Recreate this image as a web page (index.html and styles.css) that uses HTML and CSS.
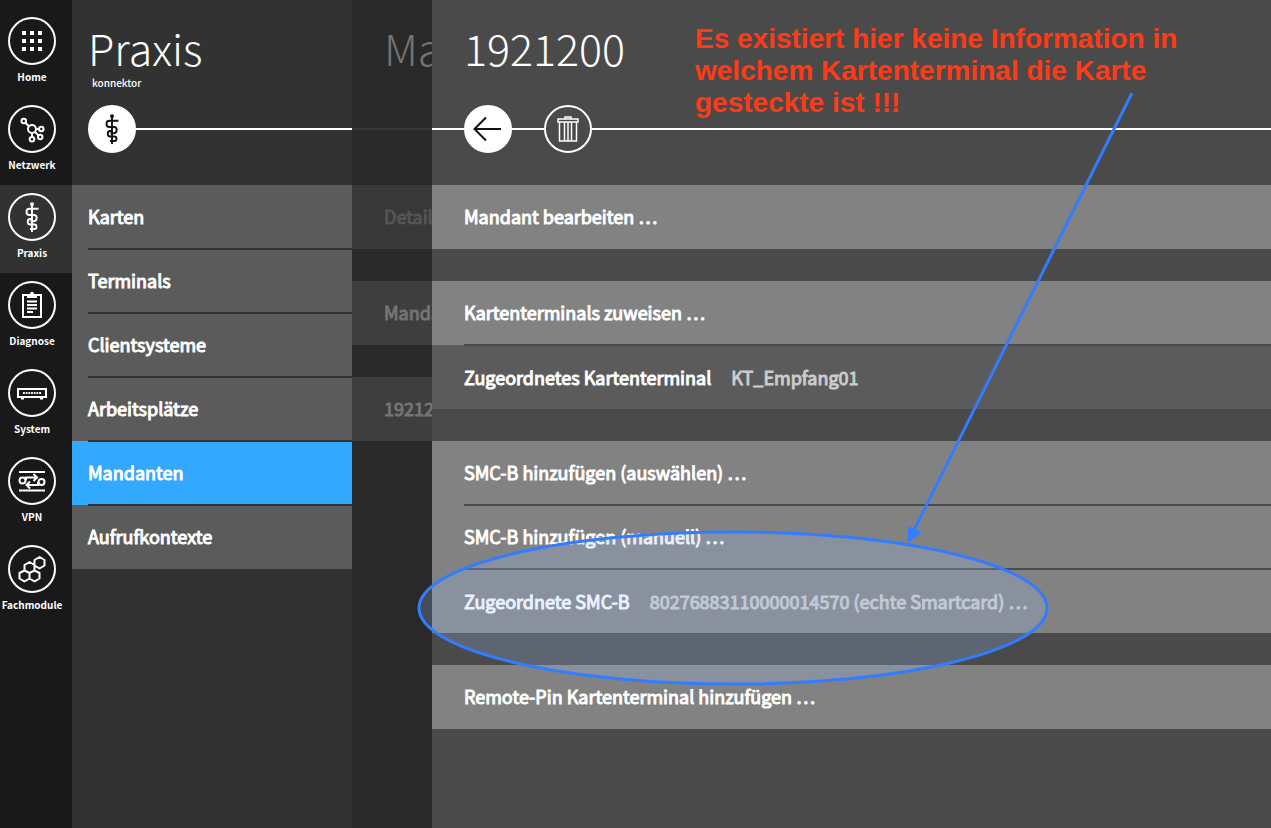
FILE: index.html
```html
<!DOCTYPE html>
<html lang="de">
<head>
<meta charset="utf-8">
<title>Konnektor – Praxis</title>
<link rel="stylesheet" href="styles.css">
</head>
<body>
<svg class="defs" width="0" height="0" aria-hidden="true">
  <symbol id="staff" viewBox="0 0 48 48"><path d="M24 11v28M30.500 15.800H21.500c-4 0-4 6.200 0 6.200h4.500c3.600 0 3.600 6.200 0 6.200h-3.500M24 26h-2c-3 0-3 5.500 0 5.500h4.500c2.600 0 2.600 4.500 0 4.500H22" fill="none" stroke="currentColor" stroke-width="1.900"/><circle cx="24" cy="11.300" r="2" fill="currentColor"/></symbol>
</svg>
<div class="app">
  <nav class="rail" aria-label="Hauptmenü">
    <a class="rail-item" href="#home"><span class="disc"><svg viewBox="0 0 48 48"><path d="M14 14h4v4h-4zM22 14h4v4h-4zM30 14h4v4h-4zM14 22h4v4h-4zM22 22h4v4h-4zM30 22h4v4h-4zM14 30h4v4h-4zM22 30h4v4h-4zM30 30h4v4h-4z" fill="currentColor"/></svg></span><span>Home</span></a>
    <a class="rail-item" href="#netzwerk"><span class="disc"><svg viewBox="0 0 48 48" fill="none" stroke="currentColor" stroke-width="2"><circle cx="24" cy="24" r="4"/><circle cx="15.800" cy="16" r="2.300"/><circle cx="33.300" cy="24" r="2.200"/><circle cx="32.200" cy="32" r="2.200"/><circle cx="24" cy="34.300" r="2.300"/><path d="m17.300 17.700 3.700 3.500M28 24h3.200M27 27l3.500 3.400M24 28v4"/></svg></span><span>Netzwerk</span></a>
    <a class="rail-item active" href="#praxis"><span class="disc"><svg><use href="#staff"/></svg></span><span>Praxis</span></a>
    <a class="rail-item" href="#diagnose"><span class="disc"><svg viewBox="0 0 48 48"><path d="M19 14h-4v22h18V14h-4" fill="none" stroke="currentColor" stroke-width="2"/><path d="M19 17v-4h3c0-3 4-3 4 0h3v4z" fill="currentColor"/><path d="M19 20.500h10M19 24h10M19 27.500h10M19 31h6" stroke="currentColor" stroke-width="1.800"/></svg></span><span>Diagnose</span></a>
    <a class="rail-item" href="#system"><span class="disc"><svg viewBox="0 0 48 48"><path d="M10 20h28v8H10z" fill="none" stroke="currentColor" stroke-width="2"/><path d="M15 24h18" stroke="currentColor" stroke-width="2" stroke-dasharray="1.800 .9"/><path d="M13 29h3v1.500h-3zM32 29h3v1.500h-3z" fill="currentColor"/></svg></span><span>System</span></a>
    <a class="rail-item" href="#vpn"><span class="disc"><svg viewBox="0 0 48 48" fill="none" stroke="currentColor" stroke-width="2"><path d="M11 15h26M11 33.500h26M18 23v-2.500h10M25.500 17l3.500 3.500-3.500 3.500M30 25v3H19M22 24.500l-3.500 3.500 3.500 3.500"/><circle cx="14.500" cy="23.500" r="3"/><circle cx="33.500" cy="25" r="3"/></svg></span><span>VPN</span></a>
    <a class="rail-item" href="#fachmodule"><span class="disc"><svg viewBox="0 0 48 48" fill="none" stroke="currentColor" stroke-width="2" stroke-linejoin="round"><path d="m31.500 12 5 3v5.500l-5 3-5-3V15zM21.500 17l5 3v5.500l-5 2.500-5-2.500V20zM16.500 25.500l5 2.500v5.500l-5 3-5-3V28zM26.500 25.500l5 2.500v5.500l-5 3-5-3V28z"/></svg></span><span>Fachmodule</span></a>
  </nav>

  <section class="panel menu">
    <header class="head">
      <h1>Praxis</h1>
      <p class="host">konnektor</p>
      <div class="track"><span class="disc solid"><svg><use href="#staff"/></svg></span></div>
    </header>
    <ul class="rows">
      <li><a class="row" href="#karten">Karten</a></li>
      <li><a class="row" href="#terminals">Terminals</a></li>
      <li><a class="row" href="#clientsysteme">Clientsysteme</a></li>
      <li><a class="row" href="#arbeitsplaetze">Arbeitsplätze</a></li>
      <li><a class="row current" href="#mandanten">Mandanten</a></li>
      <li><a class="row" href="#aufrufkontexte">Aufrufkontexte</a></li>
    </ul>
  </section>

  <section class="panel covered">
    <header class="head">
      <h2>Mandanten</h2>
      <p class="host"></p>
      <div class="track"></div>
    </header>
    <div class="groups">
      <div class="row faint">Details</div>
      <div class="row">Mandant</div>
      <div class="row">1921200</div>
    </div>
  </section>

  <main class="panel detail">
    <header class="head">
      <h2>1921200</h2>
      <p class="host"></p>
      <div class="track">
        <button class="disc solid" type="button" aria-label="Zurück"><svg viewBox="0 0 48 48"><path d="M37 24H10.500M22 12.500 10.500 24 22 35.500" fill="none" stroke="currentColor" stroke-width="2"/></svg></button>
        <button class="disc" type="button" aria-label="Löschen"><svg viewBox="0 0 48 48" fill="none" stroke="currentColor" stroke-width="1.500"><path d="M14 14h20v3H14zM21 14v-2h6v2M15.500 17v19h17V17M20.500 17v19M24 17v19M27.500 17v19"/></svg></button>
      </div>
    </header>
    <div class="groups">
      <ul class="rows"><li><a class="row" href="#bearbeiten">Mandant bearbeiten …</a></li></ul>
      <ul class="rows">
        <li><a class="row" href="#zuweisen">Kartenterminals zuweisen …</a></li>
        <li class="row pair info"><span>Zugeordnetes Kartenterminal</span><span class="value">KT_Empfang01</span></li>
      </ul>
      <ul class="rows">
        <li><a class="row" href="#smcb-auswahl">SMC-B hinzufügen (auswählen) …</a></li>
        <li><a class="row" href="#smcb-manuell">SMC-B hinzufügen (manuell) …</a></li>
        <li><a class="row pair" href="#smcb"><span>Zugeordnete SMC-B</span><span class="value">80276883110000014570 (echte Smartcard) …</span></a></li>
      </ul>
      <ul class="rows"><li><a class="row" href="#remote-pin">Remote-Pin Kartenterminal hinzufügen …</a></li></ul>
    </div>
  </main>

  <p class="note">Es existiert hier keine Information in<br>welchem Kartenterminal die Karte<br>gesteckte ist !!!</p>
  <svg class="marker" width="740" height="610" viewBox="410 80 740 610" aria-hidden="true">
    <ellipse cx="733" cy="608" rx="314" ry="76" fill="#a0c3ff" fill-opacity=".23" stroke="#327dff" stroke-width="3"/>
    <path d="M1132 93 914 530" stroke="#327dff" stroke-width="3"/>
    <path d="M908 543v-17l13.500 6.500z" fill="#327dff"/>
  </svg>
</div>
</body>
</html>
```
FILE: styles.css
```css
* { box-sizing: border-box; }
body {
  margin: 0;
  color: #fff;
  background: #4a4a4a;
  font: 400 18px/24px "Noto Sans CJK SC", "Noto Sans", sans-serif;
}
h1, h2, p, ul { margin: 0; padding: 0; }
ul { list-style: none; }
a { color: inherit; text-decoration: none; }
.defs { position: absolute; }
.app {
  position: relative;
  display: grid;
  grid-template-columns: 72px 280px 80px minmax(0, 1fr);
  min-height: 100vh;
  overflow: hidden;
}

.rail { padding-top: 9px; background: #191919; }
.rail-item {
  display: flex;
  flex-direction: column;
  align-items: center;
  gap: 4px;
  height: 88px;
  padding: 8px 8px 0 0;
  font-size: 10px;
  line-height: 16px;
  font-weight: 700;
  white-space: nowrap;
}
.rail-item.active { background: #323232; }

.disc {
  display: block;
  flex: none;
  width: 48px;
  height: 48px;
  padding: 0;
  border: 2px solid #fff;
  border-radius: 50%;
  color: #fff;
  background: transparent;
}
.disc svg { display: block; width: 48px; height: 48px; margin: -2px; }
.disc.solid { background: #fff; color: #111; }

.panel { --line: #323232; --row: #5b5b5b; --pad: 16px; background: var(--line); min-width: 0; }
.head { height: 185px; padding-top: 20px; }
.head h1, .head h2 {
  padding-left: var(--pad);
  font-size: 43px;
  line-height: 54px;
  font-weight: 300;
  white-space: nowrap;
}
.host {
  height: 31px;
  padding-left: 20px;
  font-size: 10px;
  line-height: 18px;
  font-weight: 500;
}
.track {
  display: flex;
  gap: 32px;
  height: 48px;
  padding-left: var(--pad);
  background: linear-gradient(#fff, #fff) 0 50% / 100% 2px no-repeat;
}
.menu .track { background-position: 16px 50%; background-size: calc(100% - 16px) 2px; }
.menu .track { background-position: 100% 50%; }
.track .disc:not(.solid) { background: var(--line); }
.row {
  display: flex;
  align-items: center;
  gap: 20px;
  min-height: 64px;
  padding: 0 0 2px var(--pad);
  background: var(--row);
  white-space: nowrap;
  -webkit-text-stroke: 1px currentColor;
}
.row.pair { padding-bottom: 0; }
.row.current { background: #33a8ff; }
.rows li { position: relative; }
.rows li + li::before {
  content: "";
  position: absolute;
  top: -1px;
  left: var(--pad);
  right: 0;
  height: 2px;
  background: var(--line);
}
.groups { display: flex; flex-direction: column; gap: 32px; }

.covered { --line: #292929; --row: #3e3e3e; --pad: 32px; color: #747474; overflow: hidden; }
.covered .track { background-image: linear-gradient(#393939, #393939); }
.covered .faint { background: #383838; color: #555; }

.detail { --line: #4a4a4a; --row: #828282; --pad: 32px; }
.detail .info { background: #5b5b5b; }
.value { color: #ccc; }

.note {
  position: absolute;
  top: 23px;
  left: 695px;
  color: #ff3b17;
  font: 700 28px/32px "Liberation Sans", Arial, sans-serif;
}
.marker { position: absolute; top: 80px; left: 410px; pointer-events: none; }
```
